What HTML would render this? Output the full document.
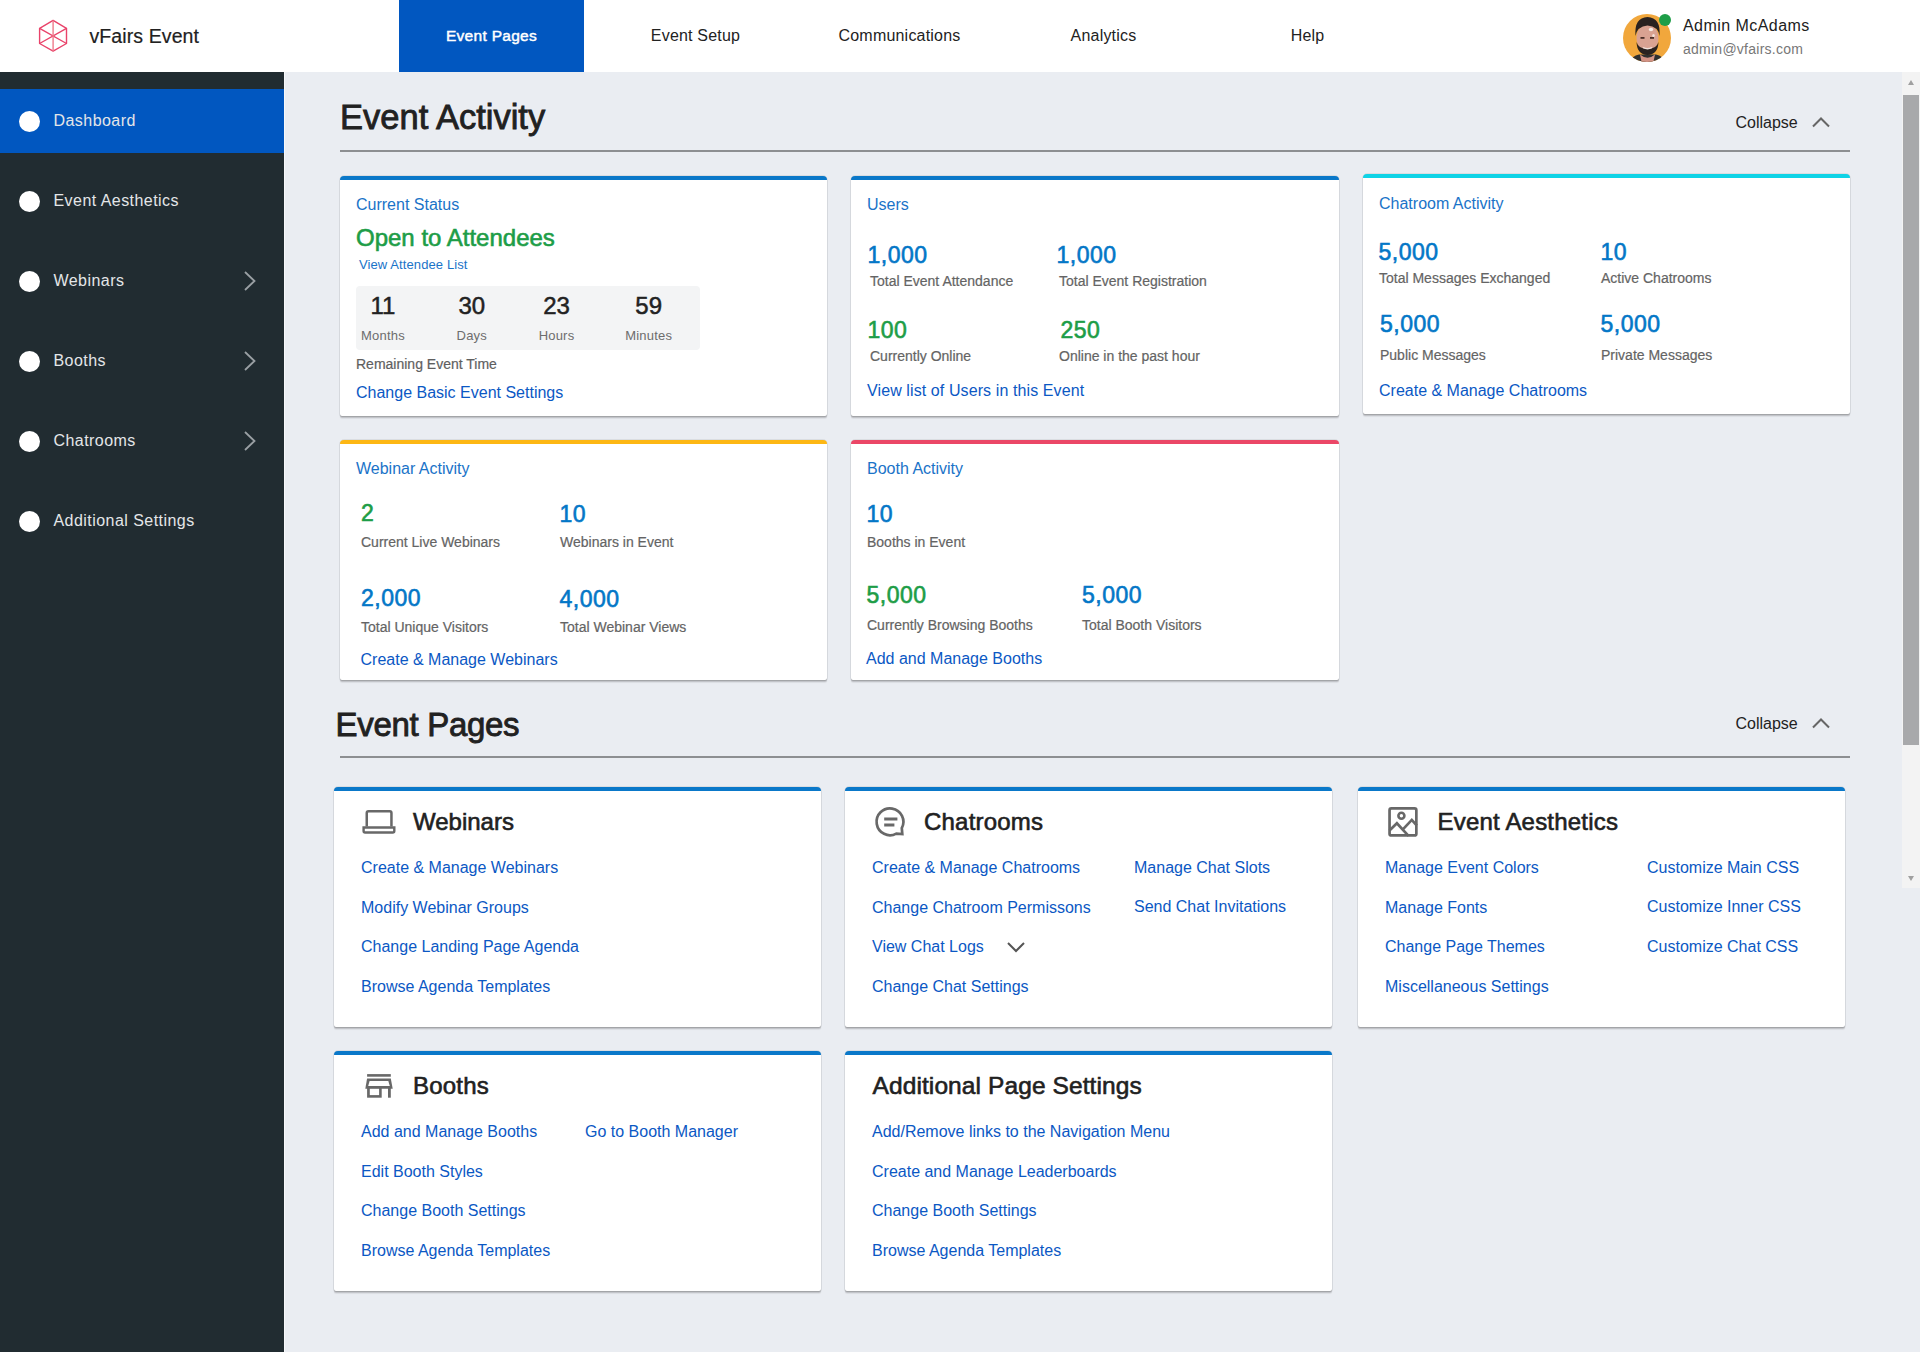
<!DOCTYPE html>
<html><head><meta charset="utf-8"><title>vFairs Event</title>
<style>
html,body{margin:0;padding:0}
body{width:1920px;height:1352px;overflow:hidden;position:relative;background:#eaedf2;font-family:"Liberation Sans",sans-serif}
.t{position:absolute;white-space:nowrap;line-height:1}
</style></head><body>
<div style="position:absolute;left:0px;top:0px;width:1920px;height:72px;background:#fff"></div>
<svg style="position:absolute;left:0;top:0" width="80" height="72" viewBox="0 0 80 72">
<g fill="none" stroke="#e9436a" stroke-width="1.4" stroke-linejoin="round">
<polygon points="53.1,20.4 66.5,28.3 66.5,43.5 53.1,51.1 39.6,43.5 39.6,28.3"/>
<line x1="39.6" y1="28.3" x2="66.5" y2="43.5"/><line x1="39.6" y1="43.5" x2="66.5" y2="28.3"/>
<line x1="53.1" y1="20.4" x2="53.1" y2="51.1" stroke="#ee7b8b"/>
</g></svg>
<div class="t" style="left:89.5px;top:27px;font-size:19.5px;color:#212121;-webkit-text-stroke:0.2px #212121;letter-spacing:0.1px;">vFairs Event</div>
<div style="position:absolute;left:399px;top:0px;width:185px;height:72px;background:#0157c0"></div>
<div class="t" style="left:391.5px;width:200px;text-align:center;top:28px;font-size:15.5px;color:#fff;-webkit-text-stroke:0.45px #fff;letter-spacing:0.3px">Event Pages</div>
<div class="t" style="left:595.5px;width:200px;text-align:center;top:28px;font-size:16px;color:#222;letter-spacing:0.2px">Event Setup</div>
<div class="t" style="left:799.5px;width:200px;text-align:center;top:28px;font-size:16px;color:#222;letter-spacing:0.2px">Communications</div>
<div class="t" style="left:1003.5px;width:200px;text-align:center;top:28px;font-size:16px;color:#222;letter-spacing:0.2px">Analytics</div>
<div class="t" style="left:1207.5px;width:200px;text-align:center;top:28px;font-size:16px;color:#222;letter-spacing:0.2px">Help</div>
<svg style="position:absolute;left:1618px;top:8px" width="60" height="60" viewBox="0 0 60 60">
<defs><clipPath id="av"><circle cx="29" cy="30" r="24"/></clipPath></defs>
<circle cx="29" cy="30" r="24" fill="#f1a73c"/>
<g clip-path="url(#av)">
<path d="M8 60 Q11 49 21 46.5 L38 46.5 Q48 49 51 60 Z" fill="#2f3030"/>
<path d="M22 46.5 Q29.5 53 37 46.5 L35 56 L24 56 Z" fill="#d49486"/>
<ellipse cx="29.5" cy="30" rx="11" ry="13.5" fill="#d9a292"/>
<path d="M17.5 28 Q16 9.5 29.5 9 Q43 9.5 41.5 28 Q40.5 18.5 29.5 17.5 Q19 18.5 17.5 28 Z" fill="#2a2220"/>
<ellipse cx="33" cy="21.5" rx="2.2" ry="1.8" fill="#f6ebe6"/>
<ellipse cx="35.5" cy="27.5" rx="1.3" ry="1.6" fill="#f3e3dc"/>
<rect x="22.5" y="29" width="4" height="1.8" fill="#4a2e28"/><rect x="32" y="29" width="4" height="1.8" fill="#4a2e28"/>
<path d="M18.5 34 Q19 46.5 29.5 47 Q40 46.5 40.5 34 Q38.5 41 29.5 41 Q20.5 41 18.5 34 Z" fill="#2a2220"/>
<path d="M25 39.5 Q29.5 42 34 39.5" fill="none" stroke="#f0e0da" stroke-width="1.4"/>
</g>
<circle cx="47" cy="12" r="6" fill="#1e9e48"/>
</svg>
<div class="t" style="left:1683px;top:18px;font-size:16px;color:#212121;letter-spacing:0.45px;">Admin McAdams</div>
<div class="t" style="left:1683px;top:42px;font-size:14px;color:#777;letter-spacing:0.25px;">admin@vfairs.com</div>
<div style="position:absolute;left:0px;top:72px;width:284px;height:1280px;background:#212c31"></div>
<div style="position:absolute;left:284px;top:72px;width:1px;height:1280px;background:#f7f8fa"></div>
<div style="position:absolute;left:0px;top:89px;width:284px;height:64px;background:#0157c0"></div>
<div style="position:absolute;left:19px;top:110.9px;width:21px;height:21px;background:#fff;border-radius:50%"></div>
<div class="t" style="left:53.5px;top:113px;font-size:16px;color:#e4e6e8;letter-spacing:0.45px;">Dashboard</div>
<div style="position:absolute;left:19px;top:190.9px;width:21px;height:21px;background:#fff;border-radius:50%"></div>
<div class="t" style="left:53.5px;top:193px;font-size:16px;color:#e4e6e8;letter-spacing:0.45px;">Event Aesthetics</div>
<div style="position:absolute;left:19px;top:270.9px;width:21px;height:21px;background:#fff;border-radius:50%"></div>
<div class="t" style="left:53.5px;top:273px;font-size:16px;color:#e4e6e8;letter-spacing:0.45px;">Webinars</div>
<svg style="position:absolute;left:240px;top:270.4px" width="20" height="22" viewBox="0 0 20 22"><path d="M5 2 L14.5 11 L5 20" fill="none" stroke="#9aa0a4" stroke-width="1.8"/></svg>
<div style="position:absolute;left:19px;top:350.9px;width:21px;height:21px;background:#fff;border-radius:50%"></div>
<div class="t" style="left:53.5px;top:353px;font-size:16px;color:#e4e6e8;letter-spacing:0.45px;">Booths</div>
<svg style="position:absolute;left:240px;top:350.4px" width="20" height="22" viewBox="0 0 20 22"><path d="M5 2 L14.5 11 L5 20" fill="none" stroke="#9aa0a4" stroke-width="1.8"/></svg>
<div style="position:absolute;left:19px;top:430.9px;width:21px;height:21px;background:#fff;border-radius:50%"></div>
<div class="t" style="left:53.5px;top:433px;font-size:16px;color:#e4e6e8;letter-spacing:0.45px;">Chatrooms</div>
<svg style="position:absolute;left:240px;top:430.4px" width="20" height="22" viewBox="0 0 20 22"><path d="M5 2 L14.5 11 L5 20" fill="none" stroke="#9aa0a4" stroke-width="1.8"/></svg>
<div style="position:absolute;left:19px;top:510.9px;width:21px;height:21px;background:#fff;border-radius:50%"></div>
<div class="t" style="left:53.5px;top:513px;font-size:16px;color:#e4e6e8;letter-spacing:0.45px;">Additional Settings</div>
<div style="position:absolute;left:1902px;top:72px;width:18px;height:816px;background:#f3f3f3"></div>
<div style="position:absolute;left:1903px;top:95px;width:16px;height:650px;background:#a8a9ab"></div>
<svg style="position:absolute;left:1902px;top:72px" width="18" height="816"><path d="M6 13 L12 13 L9 8 Z" fill="#a0a0a0"/><path d="M6 804 L12 804 L9 809 Z" fill="#a0a0a0"/></svg>
<div class="t" style="left:340px;top:100px;font-size:34.5px;color:#212121;-webkit-text-stroke:0.85px #212121;">Event Activity</div>
<div class="t" style="left:1735.5px;top:115px;font-size:16px;color:#222;">Collapse</div>
<svg style="position:absolute;left:1810px;top:115.0px" width="22" height="14" viewBox="0 0 22 14"><path d="M3 11.5 L11 3.5 L19 11.5" fill="none" stroke="#666" stroke-width="2"/></svg>
<div style="position:absolute;left:340px;top:150px;width:1510px;height:2px;background:#8d8f92"></div>
<div class="t" style="left:335.5px;top:708px;font-size:33px;color:#212121;-webkit-text-stroke:0.85px #212121;letter-spacing:-0.3px;">Event Pages</div>
<div class="t" style="left:1735.5px;top:716px;font-size:16px;color:#222;">Collapse</div>
<svg style="position:absolute;left:1810px;top:716.0px" width="22" height="14" viewBox="0 0 22 14"><path d="M3 11.5 L11 3.5 L19 11.5" fill="none" stroke="#666" stroke-width="2"/></svg>
<div style="position:absolute;left:340px;top:756px;width:1510px;height:2px;background:#8d8f92"></div>
<div style="position:absolute;left:340px;top:176px;width:487px;height:240px;background:#fff;border-radius:4px 4px 2px 2px;border-top:4px solid #0a78c9;box-sizing:border-box;box-shadow:0 0 0 0.7px rgba(0,0,0,.09),0 1px 1px rgba(0,0,0,.10),0 2px 1px rgba(0,0,0,.13),0 3px 1px rgba(0,0,0,.05)"></div>
<div style="position:absolute;left:851px;top:176px;width:488px;height:240px;background:#fff;border-radius:4px 4px 2px 2px;border-top:4px solid #0a78c9;box-sizing:border-box;box-shadow:0 0 0 0.7px rgba(0,0,0,.09),0 1px 1px rgba(0,0,0,.10),0 2px 1px rgba(0,0,0,.13),0 3px 1px rgba(0,0,0,.05)"></div>
<div style="position:absolute;left:1363px;top:174px;width:487px;height:240px;background:#fff;border-radius:4px 4px 2px 2px;border-top:4px solid #0fd3e6;box-sizing:border-box;box-shadow:0 0 0 0.7px rgba(0,0,0,.09),0 1px 1px rgba(0,0,0,.10),0 2px 1px rgba(0,0,0,.13),0 3px 1px rgba(0,0,0,.05)"></div>
<div style="position:absolute;left:340px;top:440px;width:487px;height:240px;background:#fff;border-radius:4px 4px 2px 2px;border-top:4px solid #fdb714;box-sizing:border-box;box-shadow:0 0 0 0.7px rgba(0,0,0,.09),0 1px 1px rgba(0,0,0,.10),0 2px 1px rgba(0,0,0,.13),0 3px 1px rgba(0,0,0,.05)"></div>
<div style="position:absolute;left:851px;top:440px;width:488px;height:240px;background:#fff;border-radius:4px 4px 2px 2px;border-top:4px solid #eb4767;box-sizing:border-box;box-shadow:0 0 0 0.7px rgba(0,0,0,.09),0 1px 1px rgba(0,0,0,.10),0 2px 1px rgba(0,0,0,.13),0 3px 1px rgba(0,0,0,.05)"></div>
<div class="t" style="left:356px;top:197px;font-size:16px;color:#1a73c8;">Current Status</div>
<div class="t" style="left:356px;top:226px;font-size:24px;color:#1d9d47;-webkit-text-stroke:0.6px #1d9d47;">Open to Attendees</div>
<div class="t" style="left:359px;top:258px;font-size:13px;color:#1a73c8;letter-spacing:0.1px;">View Attendee List</div>
<div style="position:absolute;left:356px;top:286px;width:344px;height:64px;background:#f3f4f5;border-radius:4px"></div>
<div class="t" style="left:333px;width:100px;text-align:center;top:294px;font-size:24px;color:#222;-webkit-text-stroke:0.5px #222">11</div>
<div class="t" style="left:333px;width:100px;text-align:center;top:329px;font-size:13px;color:#6d6d6d;letter-spacing:0.2px">Months</div>
<div class="t" style="left:421.8px;width:100px;text-align:center;top:294px;font-size:24px;color:#222;-webkit-text-stroke:0.5px #222">30</div>
<div class="t" style="left:421.8px;width:100px;text-align:center;top:329px;font-size:13px;color:#6d6d6d;letter-spacing:0.2px">Days</div>
<div class="t" style="left:506.5px;width:100px;text-align:center;top:294px;font-size:24px;color:#222;-webkit-text-stroke:0.5px #222">23</div>
<div class="t" style="left:506.5px;width:100px;text-align:center;top:329px;font-size:13px;color:#6d6d6d;letter-spacing:0.2px">Hours</div>
<div class="t" style="left:598.7px;width:100px;text-align:center;top:294px;font-size:24px;color:#222;-webkit-text-stroke:0.5px #222">59</div>
<div class="t" style="left:598.7px;width:100px;text-align:center;top:329px;font-size:13px;color:#6d6d6d;letter-spacing:0.2px">Minutes</div>
<div class="t" style="left:356px;top:357px;font-size:14px;color:#5f5f5f;-webkit-text-stroke:0.2px #5f5f5f;">Remaining Event Time</div>
<div class="t" style="left:356px;top:385px;font-size:16px;color:#0b58c4;">Change Basic Event Settings</div>
<div class="t" style="left:867px;top:197px;font-size:16px;color:#1a73c8;">Users</div>
<div class="t" style="left:867.5px;top:244px;font-size:23px;color:#0377c7;-webkit-text-stroke:0.6px #0377c7;letter-spacing:0.5px;">1,000</div>
<div class="t" style="left:1056.5px;top:244px;font-size:23px;color:#0377c7;-webkit-text-stroke:0.6px #0377c7;letter-spacing:0.5px;">1,000</div>
<div class="t" style="left:870px;top:274px;font-size:14px;color:#646464;-webkit-text-stroke:0.2px #646464;">Total Event Attendance</div>
<div class="t" style="left:1059px;top:274px;font-size:14px;color:#646464;-webkit-text-stroke:0.2px #646464;">Total Event Registration</div>
<div class="t" style="left:867.5px;top:319px;font-size:23px;color:#1d9d47;-webkit-text-stroke:0.6px #1d9d47;letter-spacing:0.5px;">100</div>
<div class="t" style="left:1060.5px;top:319px;font-size:23px;color:#1d9d47;-webkit-text-stroke:0.6px #1d9d47;letter-spacing:0.5px;">250</div>
<div class="t" style="left:870px;top:349px;font-size:14px;color:#646464;-webkit-text-stroke:0.2px #646464;">Currently Online</div>
<div class="t" style="left:1059px;top:349px;font-size:14px;color:#646464;-webkit-text-stroke:0.2px #646464;">Online in the past hour</div>
<div class="t" style="left:867px;top:383px;font-size:16px;color:#0b58c4;letter-spacing:0.1px;">View list of Users in this Event</div>
<div class="t" style="left:1379px;top:196px;font-size:16px;color:#1a73c8;">Chatroom Activity</div>
<div class="t" style="left:1378.5px;top:241px;font-size:23px;color:#0377c7;-webkit-text-stroke:0.6px #0377c7;letter-spacing:0.5px;">5,000</div>
<div class="t" style="left:1600.5px;top:241px;font-size:23px;color:#0377c7;-webkit-text-stroke:0.6px #0377c7;letter-spacing:0.5px;">10</div>
<div class="t" style="left:1379px;top:271px;font-size:14px;color:#646464;-webkit-text-stroke:0.2px #646464;">Total Messages Exchanged</div>
<div class="t" style="left:1601px;top:271px;font-size:14px;color:#646464;-webkit-text-stroke:0.2px #646464;">Active Chatrooms</div>
<div class="t" style="left:1380px;top:313px;font-size:23px;color:#0377c7;-webkit-text-stroke:0.6px #0377c7;letter-spacing:0.5px;">5,000</div>
<div class="t" style="left:1600.5px;top:313px;font-size:23px;color:#0377c7;-webkit-text-stroke:0.6px #0377c7;letter-spacing:0.5px;">5,000</div>
<div class="t" style="left:1380px;top:348px;font-size:14px;color:#646464;-webkit-text-stroke:0.2px #646464;">Public Messages</div>
<div class="t" style="left:1601px;top:348px;font-size:14px;color:#646464;-webkit-text-stroke:0.2px #646464;">Private Messages</div>
<div class="t" style="left:1379px;top:383px;font-size:16px;color:#0b58c4;">Create &amp; Manage Chatrooms</div>
<div class="t" style="left:356px;top:461px;font-size:16px;color:#1a73c8;">Webinar Activity</div>
<div class="t" style="left:361px;top:502px;font-size:23px;color:#1d9d47;-webkit-text-stroke:0.6px #1d9d47;letter-spacing:0.5px;">2</div>
<div class="t" style="left:559.5px;top:503px;font-size:23px;color:#0377c7;-webkit-text-stroke:0.6px #0377c7;letter-spacing:0.5px;">10</div>
<div class="t" style="left:361px;top:535px;font-size:14px;color:#646464;-webkit-text-stroke:0.2px #646464;">Current Live Webinars</div>
<div class="t" style="left:560px;top:535px;font-size:14px;color:#646464;-webkit-text-stroke:0.2px #646464;">Webinars in Event</div>
<div class="t" style="left:361px;top:587px;font-size:23px;color:#0377c7;-webkit-text-stroke:0.6px #0377c7;letter-spacing:0.5px;">2,000</div>
<div class="t" style="left:559.5px;top:588px;font-size:23px;color:#0377c7;-webkit-text-stroke:0.6px #0377c7;letter-spacing:0.5px;">4,000</div>
<div class="t" style="left:361px;top:620px;font-size:14px;color:#646464;-webkit-text-stroke:0.2px #646464;">Total Unique Visitors</div>
<div class="t" style="left:560px;top:620px;font-size:14px;color:#646464;-webkit-text-stroke:0.2px #646464;">Total Webinar Views</div>
<div class="t" style="left:360.5px;top:652px;font-size:16px;color:#0b58c4;">Create &amp; Manage Webinars</div>
<div class="t" style="left:867px;top:461px;font-size:16px;color:#1a73c8;">Booth Activity</div>
<div class="t" style="left:866.5px;top:503px;font-size:23px;color:#0377c7;-webkit-text-stroke:0.6px #0377c7;letter-spacing:0.5px;">10</div>
<div class="t" style="left:867px;top:535px;font-size:14px;color:#646464;-webkit-text-stroke:0.2px #646464;">Booths in Event</div>
<div class="t" style="left:866.5px;top:584px;font-size:23px;color:#1d9d47;-webkit-text-stroke:0.6px #1d9d47;letter-spacing:0.5px;">5,000</div>
<div class="t" style="left:1082px;top:584px;font-size:23px;color:#0377c7;-webkit-text-stroke:0.6px #0377c7;letter-spacing:0.5px;">5,000</div>
<div class="t" style="left:867px;top:618px;font-size:14px;color:#646464;-webkit-text-stroke:0.2px #646464;">Currently Browsing Booths</div>
<div class="t" style="left:1082px;top:618px;font-size:14px;color:#646464;-webkit-text-stroke:0.2px #646464;">Total Booth Visitors</div>
<div class="t" style="left:866px;top:651px;font-size:16px;color:#0b58c4;">Add and Manage Booths</div>
<div style="position:absolute;left:334px;top:787px;width:487px;height:240px;background:#fff;border-radius:4px 4px 2px 2px;border-top:4px solid #0a78c9;box-sizing:border-box;box-shadow:0 0 0 0.7px rgba(0,0,0,.09),0 1px 1px rgba(0,0,0,.10),0 2px 1px rgba(0,0,0,.13),0 3px 1px rgba(0,0,0,.05)"></div>
<div style="position:absolute;left:845px;top:787px;width:487px;height:240px;background:#fff;border-radius:4px 4px 2px 2px;border-top:4px solid #0a78c9;box-sizing:border-box;box-shadow:0 0 0 0.7px rgba(0,0,0,.09),0 1px 1px rgba(0,0,0,.10),0 2px 1px rgba(0,0,0,.13),0 3px 1px rgba(0,0,0,.05)"></div>
<div style="position:absolute;left:1358px;top:787px;width:487px;height:240px;background:#fff;border-radius:4px 4px 2px 2px;border-top:4px solid #0a78c9;box-sizing:border-box;box-shadow:0 0 0 0.7px rgba(0,0,0,.09),0 1px 1px rgba(0,0,0,.10),0 2px 1px rgba(0,0,0,.13),0 3px 1px rgba(0,0,0,.05)"></div>
<div style="position:absolute;left:334px;top:1051px;width:487px;height:240px;background:#fff;border-radius:4px 4px 2px 2px;border-top:4px solid #0a78c9;box-sizing:border-box;box-shadow:0 0 0 0.7px rgba(0,0,0,.09),0 1px 1px rgba(0,0,0,.10),0 2px 1px rgba(0,0,0,.13),0 3px 1px rgba(0,0,0,.05)"></div>
<div style="position:absolute;left:845px;top:1051px;width:487px;height:240px;background:#fff;border-radius:4px 4px 2px 2px;border-top:4px solid #0a78c9;box-sizing:border-box;box-shadow:0 0 0 0.7px rgba(0,0,0,.09),0 1px 1px rgba(0,0,0,.10),0 2px 1px rgba(0,0,0,.13),0 3px 1px rgba(0,0,0,.05)"></div>
<svg style="position:absolute;left:0;top:0" width="1920" height="1352" viewBox="0 0 1920 1352">
<g fill="none" stroke="#686868" stroke-width="2.5">
<path d="M366.75 826.6 V812.9 Q366.75 811.15 368.5 811.15 H389.7 Q391.45 811.15 391.45 812.9 V826.6"/>
<path d="M363.6 827.5 H394.3 V831 Q394.3 832.5 392.8 832.5 H365.1 Q363.6 832.5 363.6 831 Z" stroke-width="2.4"/>
<path d="M901.8 828.1 L902.3 834.1 L896.3 833.6 A13.4 13.4 0 1 1 901.8 828.1 Z" stroke-width="2.7" stroke-linejoin="miter"/>
<path d="M884.2 819 H897.4 M884.2 825 H894.4" stroke-width="3"/>
<rect x="1389.55" y="808.35" width="26.8" height="27.1" rx="1.8" stroke-width="2.7"/>
<circle cx="1401.4" cy="815.8" r="3" stroke-width="2.6"/>
<path d="M1389.5 830.5 L1396.9 823.3 L1408.5 835.8 M1403.6 828.6 L1411.8 819.9 L1416.8 825.5" stroke-width="2.7"/>
</g>
<g fill="#686868">
<rect x="367.1" y="1074.1" width="23.7" height="2.6"/>
<path d="M367.1 1078.4 H390.8 L392.7 1088.8 H365.3 Z"/>
<rect x="367.1" y="1088" width="14.6" height="9.7"/>
<rect x="388" y="1088" width="2.8" height="9.7"/>
</g>
<g fill="#fff">
<path d="M369.6 1080.9 H388.3 L389.8 1086.1 H368.2 Z"/>
<rect x="369.8" y="1088.8" width="9.3" height="6.3"/>
</g>
</svg>
<div class="t" style="left:413px;top:810px;font-size:24px;color:#212121;-webkit-text-stroke:0.6px #212121;">Webinars</div>
<div class="t" style="left:361px;top:860px;font-size:16px;color:#0b58c4;">Create &amp; Manage Webinars</div>
<div class="t" style="left:361px;top:900px;font-size:16px;color:#0b58c4;">Modify Webinar Groups</div>
<div class="t" style="left:361px;top:939px;font-size:16px;color:#0b58c4;">Change Landing Page Agenda</div>
<div class="t" style="left:361px;top:979px;font-size:16px;color:#0b58c4;">Browse Agenda Templates</div>
<div class="t" style="left:924px;top:810px;font-size:24px;color:#212121;-webkit-text-stroke:0.6px #212121;letter-spacing:0.2px;">Chatrooms</div>
<div class="t" style="left:872px;top:860px;font-size:16px;color:#0b58c4;">Create &amp; Manage Chatrooms</div>
<div class="t" style="left:872px;top:900px;font-size:16px;color:#0b58c4;">Change Chatroom Permissons</div>
<div class="t" style="left:872px;top:939px;font-size:16px;color:#0b58c4;">View Chat Logs</div>
<div class="t" style="left:872px;top:979px;font-size:16px;color:#0b58c4;">Change Chat Settings</div>
<div class="t" style="left:1134px;top:860px;font-size:16px;color:#0b58c4;">Manage Chat Slots</div>
<div class="t" style="left:1134px;top:899px;font-size:16px;color:#0b58c4;">Send Chat Invitations</div>
<svg style="position:absolute;left:1005px;top:938px" width="22" height="18" viewBox="0 0 22 18"><path d="M3 5 L11 13 L19 5" fill="none" stroke="#555" stroke-width="2"/></svg>
<div class="t" style="left:1437.5px;top:810px;font-size:24px;color:#212121;-webkit-text-stroke:0.6px #212121;letter-spacing:0.2px;">Event Aesthetics</div>
<div class="t" style="left:1385px;top:860px;font-size:16px;color:#0b58c4;">Manage Event Colors</div>
<div class="t" style="left:1385px;top:900px;font-size:16px;color:#0b58c4;">Manage Fonts</div>
<div class="t" style="left:1385px;top:939px;font-size:16px;color:#0b58c4;">Change Page Themes</div>
<div class="t" style="left:1385px;top:979px;font-size:16px;color:#0b58c4;">Miscellaneous Settings</div>
<div class="t" style="left:1647px;top:860px;font-size:16px;color:#0b58c4;">Customize Main CSS</div>
<div class="t" style="left:1647px;top:899px;font-size:16px;color:#0b58c4;">Customize Inner CSS</div>
<div class="t" style="left:1647px;top:939px;font-size:16px;color:#0b58c4;">Customize Chat CSS</div>
<div class="t" style="left:413px;top:1074px;font-size:24px;color:#212121;-webkit-text-stroke:0.6px #212121;letter-spacing:0.2px;">Booths</div>
<div class="t" style="left:361px;top:1124px;font-size:16px;color:#0b58c4;">Add and Manage Booths</div>
<div class="t" style="left:361px;top:1164px;font-size:16px;color:#0b58c4;">Edit Booth Styles</div>
<div class="t" style="left:361px;top:1203px;font-size:16px;color:#0b58c4;">Change Booth Settings</div>
<div class="t" style="left:361px;top:1243px;font-size:16px;color:#0b58c4;">Browse Agenda Templates</div>
<div class="t" style="left:585px;top:1124px;font-size:16px;color:#0b58c4;">Go to Booth Manager</div>
<div class="t" style="left:872.5px;top:1074px;font-size:24.5px;color:#212121;-webkit-text-stroke:0.6px #212121;letter-spacing:0.1px;">Additional Page Settings</div>
<div class="t" style="left:872px;top:1124px;font-size:16px;color:#0b58c4;">Add/Remove links to the Navigation Menu</div>
<div class="t" style="left:872px;top:1164px;font-size:16px;color:#0b58c4;">Create and Manage Leaderboards</div>
<div class="t" style="left:872px;top:1203px;font-size:16px;color:#0b58c4;">Change Booth Settings</div>
<div class="t" style="left:872px;top:1243px;font-size:16px;color:#0b58c4;">Browse Agenda Templates</div>
</body></html>
